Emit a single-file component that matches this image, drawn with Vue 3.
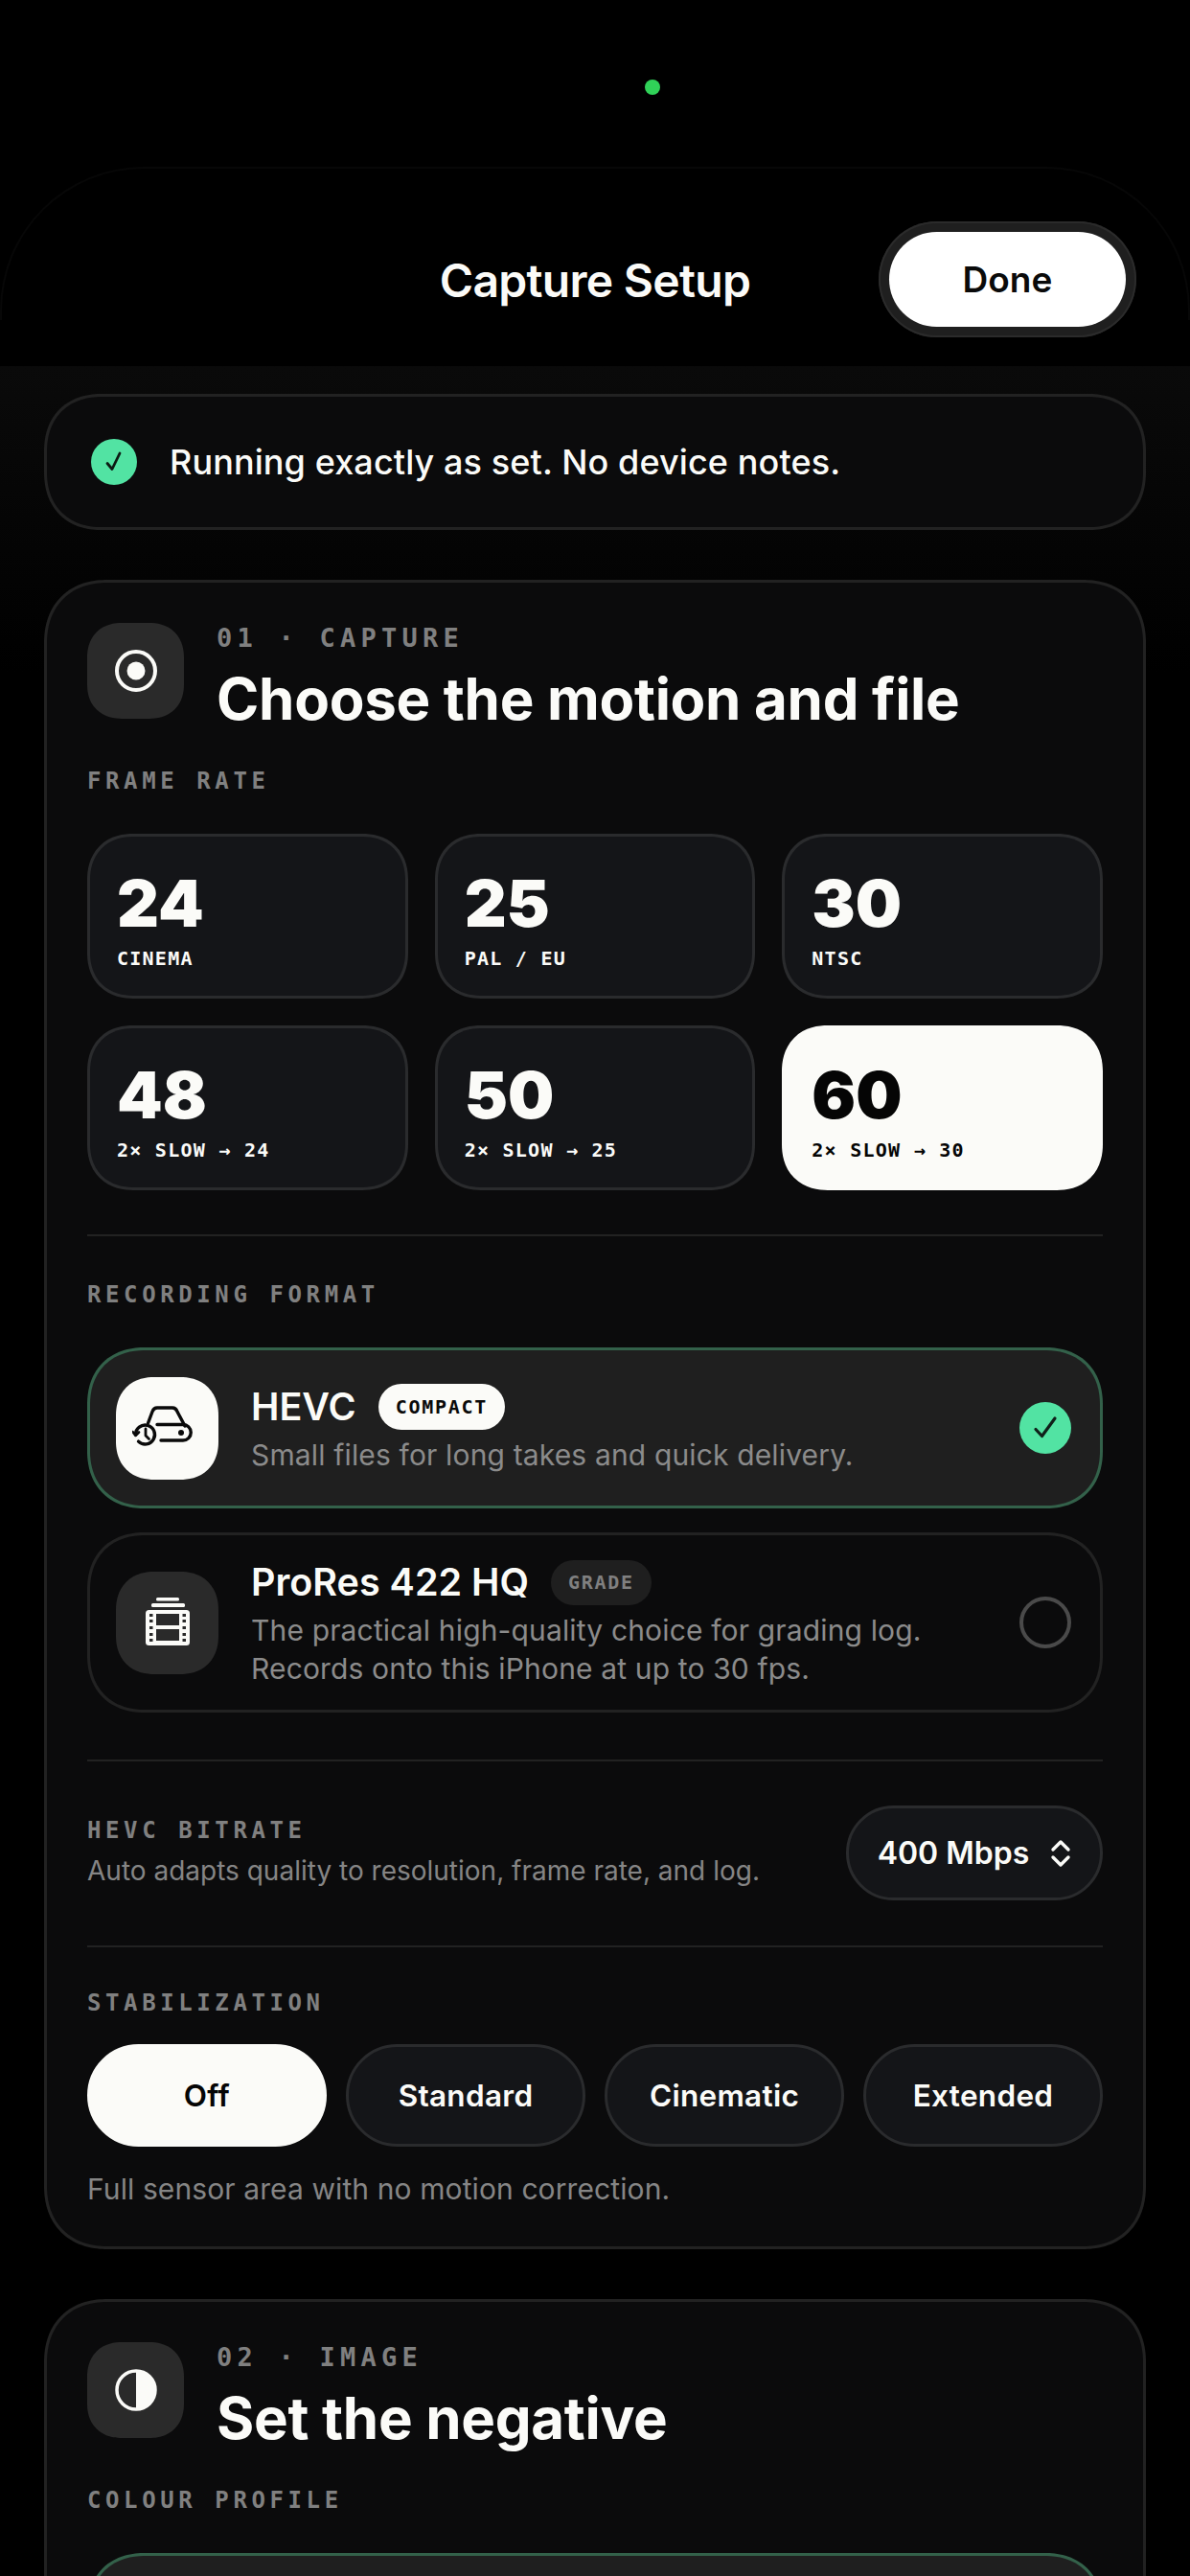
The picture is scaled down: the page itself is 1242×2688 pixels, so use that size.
<script setup>
const rates = [
  { fps: '24', note: 'CINEMA' },
  { fps: '25', note: 'PAL / EU' },
  { fps: '30', note: 'NTSC' },
  { fps: '48', note: '2× SLOW → 24' },
  { fps: '50', note: '2× SLOW → 25' },
  { fps: '60', note: '2× SLOW → 30', on: true },
]
const stabilization = [
  { name: 'Off', on: true },
  { name: 'Standard' },
  { name: 'Cinematic' },
  { name: 'Extended' },
]
</script>

<template>
  <div class="screen">
    <span class="cam-dot"></span>
    <header class="topbar">
      <span></span>
      <h1>Capture Setup</h1>
      <div class="done-wrap"><button class="done">Done</button></div>
    </header>

    <main class="content">
      <div class="status">
        <span class="status-check">
          <svg width="26" height="26" viewBox="0 0 26 26" fill="none"><path d="M6 14.500l5 6L19 4" stroke="#0c1a13" stroke-width="2.800" stroke-linecap="round" stroke-linejoin="round" /></svg>
        </span>
        <span>Running exactly as set. No device notes.</span>
      </div>

      <section class="card">
        <div class="card-head">
          <div class="tile">
            <svg width="44" height="44" viewBox="0 0 44 44" fill="none">
              <circle cx="22" cy="22" r="20" stroke="#fbfbf8" stroke-width="4" />
              <circle cx="22" cy="22" r="9.500" fill="#fbfbf8" />
            </svg>
          </div>
          <div class="head-text">
            <div class="eyebrow">01 · CAPTURE</div>
            <h2>Choose the motion and file</h2>
          </div>
        </div>

        <div class="label label-first">FRAME RATE</div>
        <div class="rates">
          <div v-for="r in rates" :key="r.fps" class="rate" :class="{ on: r.on }">
            <div class="fps">{{ r.fps }}</div>
            <div class="fps-note">{{ r.note }}</div>
          </div>
        </div>

        <div class="rule"></div>

        <div class="label">RECORDING FORMAT</div>
        <div class="formats">
          <div class="format selected">
            <div class="format-icon">
              <svg class="drive" width="64" height="44" viewBox="0 0 64 44" fill="none" stroke="#0a0a0a" stroke-width="3.400" stroke-linecap="round" stroke-linejoin="round">
                <path d="M16.500 19L21 7q1.500-4 5-4h16q3.500 0 5 4l8 15" />
                <path d="M26 20.500h27a8.250 8.250 0 0 1 0 16.500H30" />
                <circle cx="51" cy="29" r="3" fill="#0a0a0a" stroke="none" />
                <path d="M3.500 31a10 10 0 1 1 3 7.100" />
                <path d="M0.500 28l3 4 3.500-3.500" stroke-width="2.600" />
                <path d="M14 25v7l3.500 3.500" stroke-width="2.800" />
              </svg>
            </div>
            <div class="format-text">
              <div class="format-title">
                <span>HEVC</span>
                <span class="tag tag-light">COMPACT</span>
              </div>
              <p>Small files for long takes and quick delivery.</p>
            </div>
            <span class="tick">
              <svg width="32" height="32" viewBox="0 0 32 32" fill="none"><path d="M6 17.500l6.500 7L26 6" stroke="#10201a" stroke-width="3.200" stroke-linecap="round" stroke-linejoin="round" /></svg>
            </span>
          </div>

          <div class="format">
            <div class="format-icon dark">
              <svg width="46" height="52" viewBox="0 0 46 52">
                <rect x="11" y="0" width="24" height="3.500" rx="1.500" fill="#fbfbf8" />
                <rect x="6" y="6" width="35" height="4" rx="1.500" fill="#fbfbf8" />
                <rect x="0" y="13" width="46" height="37" rx="3.500" fill="#fbfbf8" />
                <rect x="11" y="17" width="24" height="12" fill="#2a2a2a" />
                <rect x="11" y="33" width="24" height="12" fill="#2a2a2a" />
                <g fill="#2a2a2a">
                  <rect x="4" y="17" width="3.500" height="3" /><rect x="4" y="23" width="3.500" height="3" /><rect x="4" y="30" width="3.500" height="3" /><rect x="4" y="37" width="3.500" height="3" /><rect x="4" y="43" width="3.500" height="3" />
                  <rect x="38.500" y="17" width="3.500" height="3" /><rect x="38.500" y="23" width="3.500" height="3" /><rect x="38.500" y="30" width="3.500" height="3" /><rect x="38.500" y="37" width="3.500" height="3" /><rect x="38.500" y="43" width="3.500" height="3" />
                </g>
              </svg>
            </div>
            <div class="format-text">
              <div class="format-title">
                <span>ProRes 422 HQ</span>
                <span class="tag">GRADE</span>
              </div>
              <p>The practical high-quality choice for grading log.<br />Records onto this iPhone at up to 30 fps.</p>
            </div>
            <span class="radio"></span>
          </div>
        </div>

        <div class="rule rule-b"></div>

        <div class="bitrate">
          <div>
            <div class="label label-tight">HEVC BITRATE</div>
            <div class="hint">Auto adapts quality to resolution, frame rate, and log.</div>
          </div>
          <button class="picker">
            <span>400 Mbps</span>
            <svg width="22" height="30" viewBox="0 0 22 30" fill="none" stroke="#fbfbf8" stroke-width="3.400" stroke-linecap="round" stroke-linejoin="round">
              <path d="M3 11l8-8 8 8" /><path d="M3 19l8 8 8-8" />
            </svg>
          </button>
        </div>

        <div class="rule rule-c"></div>

        <div class="label label-stab">STABILIZATION</div>
        <div class="pills">
          <button v-for="s in stabilization" :key="s.name" class="pill" :class="{ on: s.on }">{{ s.name }}</button>
        </div>
        <div class="stab-note">Full sensor area with no motion correction.</div>
      </section>

      <section class="card card-two">
        <div class="card-head">
          <div class="tile">
            <svg width="44" height="44" viewBox="0 0 44 44">
              <circle cx="22" cy="22" r="20" fill="none" stroke="#fbfbf8" stroke-width="3.500" />
              <path d="M22 2a20 20 0 0 1 0 40z" fill="#fbfbf8" />
            </svg>
          </div>
          <div class="head-text">
            <div class="eyebrow">02 · IMAGE</div>
            <h2>Set the negative</h2>
          </div>
        </div>
        <div class="label label-first">COLOUR PROFILE</div>
        <div class="format selected stub"></div>
      </section>
    </main>
  </div>
</template>

<style>
html,
body {
  margin: 0;
  background: #000;
}
</style>

<style scoped>
.screen {
  position: relative;
  width: 1242px;
  height: 2688px;
  overflow: hidden;
  background: #000;
  color: #fbfbf8;
  font-family: Inter, "Liberation Sans", sans-serif;
}
.cam-dot {
  position: absolute;
  z-index: 2;
  left: 673px;
  top: 83px;
  width: 16px;
  height: 16px;
  border-radius: 50%;
  background: #30d158;
}
.topbar {
  position: relative;
  height: 382px;
  box-sizing: border-box;
  padding: 231px 56px 0;
  display: grid;
  grid-template-columns: 1fr auto 1fr;
  align-items: start;
  background: #000;
}
.topbar::before {
  content: '';
  position: absolute;
  left: 0;
  right: 0;
  top: 174px;
  height: 160px;
  border: 2px solid #070707;
  border-bottom: 0;
  border-radius: 150px 150px 0 0;
  box-sizing: border-box;
}
h1 {
  margin: 0;
  height: 123px;
  line-height: 124px;
  font-size: 48px;
  font-weight: 600;
  letter-spacing: -0.7px;
  white-space: nowrap;
}
.done-wrap {
  justify-self: end;
  position: relative;
  padding: 11px;
  border-radius: 62px;
  background: #1f1f1f;
  box-shadow: inset 0 0 0 2px #2b2b2b;
}
.done {
  display: block;
  width: 247px;
  height: 99px;
  border: 0;
  border-radius: 50px;
  background: #fff;
  color: #0a0a0a;
  font-family: inherit;
  font-size: 37px;
  font-weight: 600;
}
.content {
  padding: 29px 46px 0;
  background: linear-gradient(#0a0a0a, #000 320px);
  height: 2306px;
  box-sizing: border-box;
}
.status {
  height: 142px;
  box-sizing: border-box;
  display: flex;
  align-items: center;
  gap: 34px;
  padding: 0 46px;
  background: #0b0b0c;
  border: 3px solid #222;
  border-radius: 60px;
  font-size: 36px;
  font-weight: 500;
  letter-spacing: 0.1px;
}
.status-check {
  width: 48px;
  height: 48px;
  border-radius: 50%;
  background: #52e3a3;
  display: flex;
  align-items: center;
  justify-content: center;
  flex: none;
}
.card {
  margin-top: 52px;
  box-sizing: border-box;
  padding: 42px 42px 40px;
  background: #0b0b0c;
  border: 3px solid #222;
  border-radius: 66px;
}
.card-head {
  display: flex;
  align-items: flex-start;
  gap: 34px;
}
.tile {
  width: 101px;
  height: 100px;
  flex: none;
  border-radius: 36px;
  background: #2a2a2a;
  display: flex;
  align-items: center;
  justify-content: center;
}
.head-text {
  padding-top: 2px;
}
.eyebrow {
  font-family: "DejaVu Sans Mono", monospace;
  font-size: 27px;
  line-height: 28px;
  font-weight: 700;
  letter-spacing: 5.250px;
  color: #808080;
}
h2 {
  margin: 21px 0 0;
  font-size: 60px;
  line-height: 56px;
  font-weight: 700;
  letter-spacing: -0.3px;
  white-space: nowrap;
}
.label {
  margin-top: 48px;
  font-family: "DejaVu Sans Mono", monospace;
  font-size: 24px;
  line-height: 26px;
  font-weight: 700;
  letter-spacing: 4.600px;
  color: #808080;
}
.label-first {
  margin-top: 45px;
}
.rates {
  margin-top: 42px;
  display: grid;
  grid-template-columns: repeat(3, 1fr);
  gap: 28px;
}
.rate {
  height: 172px;
  box-sizing: border-box;
  padding: 34px 28px 0;
  background: #141518;
  border: 3px solid #2a2b2d;
  border-radius: 48px;
}
.rate.on {
  background: #fbfbf8;
  border-color: #fbfbf8;
  color: #050505;
}
.fps {
  font-size: 68px;
  line-height: 70px;
  font-weight: 900;
}
.fps-note {
  margin-top: 10px;
  font-family: "DejaVu Sans Mono", monospace;
  font-size: 20px;
  line-height: 26px;
  font-weight: 700;
  letter-spacing: 1.250px;
}
.rule {
  margin-top: 46px;
  height: 2px;
  background: #222;
}
.rule-b {
  margin-top: 49px;
}
.formats {
  margin-top: 42px;
  display: flex;
  flex-direction: column;
  gap: 25px;
}
.format {
  display: flex;
  align-items: center;
  min-height: 188px;
  box-sizing: border-box;
  padding: 0 30px 0 27px;
  border: 3px solid #222;
  border-radius: 60px;
}
.format.selected {
  min-height: 168px;
  background: #1f1f1f;
  border-color: #33614a;
}
.format-icon {
  width: 107px;
  height: 107px;
  flex: none;
  border-radius: 40px;
  background: #fbfbf8;
  display: flex;
  align-items: center;
  justify-content: center;
}
.format-icon.dark {
  background: #2a2a2a;
}
.drive {
  margin-right: 9px;
  margin-top: -4px;
}
.format-text {
  margin-left: 34px;
  padding-top: 2px;
  flex: 1;
}
.format-title {
  display: flex;
  align-items: center;
  gap: 23px;
  font-size: 39.500px;
  line-height: 48px;
  font-weight: 600;
}
.tag {
  height: 47px;
  padding: 0 18px;
  display: flex;
  align-items: center;
  border-radius: 24px;
  background: #1f1f1f;
  color: #808080;
  font-family: "DejaVu Sans Mono", monospace;
  font-size: 20px;
  font-weight: 700;
  letter-spacing: 1.700px;
}
.tag-light {
  height: 48px;
  background: #fbfbf8;
  color: #0a0a0a;
}
.format-text p {
  margin: 6px 0 0;
  font-size: 30px;
  line-height: 40px;
  letter-spacing: 0.15px;
  color: #8b8b8b;
  white-space: nowrap;
}
.tick {
  width: 54px;
  height: 54px;
  flex: none;
  border-radius: 50%;
  background: #52e3a3;
  display: flex;
  align-items: center;
  justify-content: center;
}
.radio {
  width: 54px;
  height: 54px;
  flex: none;
  box-sizing: border-box;
  border-radius: 50%;
  border: 4px solid #4a4a4a;
}
.bitrate {
  margin-top: 46px;
  display: flex;
  align-items: center;
  justify-content: space-between;
}
.label-tight {
  margin-top: 0;
}
.hint {
  margin-top: 11px;
  font-size: 28px;
  line-height: 36px;
  color: #858585;
}
.picker {
  width: 268px;
  height: 99px;
  display: flex;
  align-items: center;
  justify-content: center;
  gap: 22px;
  background: #141518;
  border: 3px solid #2a2b2d;
  border-radius: 50px;
  color: #fbfbf8;
  font-family: inherit;
  font-size: 32px;
  font-weight: 600;
}
.rule-c {
  margin-top: 47px;
}
.label-stab {
  margin-top: 45px;
}
.pills {
  margin-top: 30px;
  display: grid;
  grid-template-columns: repeat(4, 1fr);
  gap: 20px;
}
.pill {
  height: 107px;
  background: #141518;
  border: 3px solid #2a2b2d;
  border-radius: 54px;
  color: #fbfbf8;
  font-family: inherit;
  font-size: 31.500px;
  font-weight: 600;
  letter-spacing: 0.3px;
}
.pill.on {
  background: #fbfbf8;
  border-color: #fbfbf8;
  color: #050505;
}
.stab-note {
  margin-top: 24px;
  font-size: 30px;
  line-height: 40px;
  letter-spacing: 0.1px;
  color: #858585;
}
.stub {
  margin-top: 42px;
  min-height: 300px;
}
.tile,
.format-icon,
.rate,
.format,
.status,
.card {
  corner-shape: superellipse(1.15);
}
</style>
